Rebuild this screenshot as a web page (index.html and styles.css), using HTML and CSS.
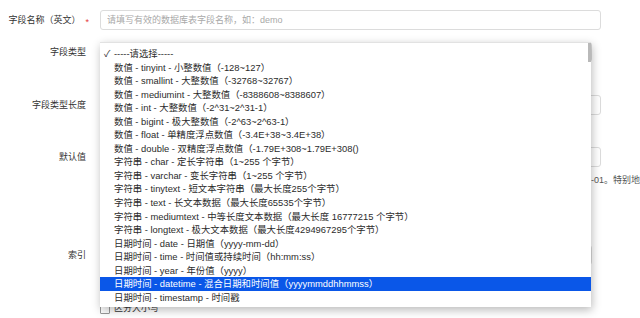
FILE: index.html
```
<!DOCTYPE html>
<html lang="zh-CN">

<head>
    <meta charset="UTF-8">
    <title>字段编辑</title>
    <link rel="stylesheet" href="styles.css">
</head>

<body>
    <form class="form">
        <div class="field">
            <label class="field-label field-label-req">字段名称（英文）<span class="req">*</span></label>
            <div class="field-body">
                <input class="control" type="text" placeholder="请填写有效的数据库表字段名称，如：demo">
            </div>
        </div>

        <div class="field field-type">
            <label class="field-label">字段类型</label>
            <div class="field-body">
                <div class="control select"></div>
                <p class="help">&nbsp;</p>
            </div>
        </div>

        <div class="field field-length">
            <label class="field-label">字段类型长度</label>
            <div class="field-body">
                <input class="control" type="text">
                <p class="help">&nbsp;</p>
            </div>
        </div>

        <div class="field field-default">
            <label class="field-label">默认值</label>
            <div class="field-body">
                <input class="control" type="text">
                <p class="help help-right">日期类型默认值格式如 2018-01-01。特别地</p>
            </div>
        </div>

        <div class="field field-index">
            <label class="field-label">索引</label>
            <div class="field-body">
                <div class="control select"></div>
                <label class="check"><span class="box"></span>区分大小写</label>
            </div>
        </div>
    </form>

    <!-- open native dropdown of 字段类型 -->
    <ul class="dropdown">
        <li class="opt checked">-----请选择-----</li>
        <li class="opt">数值 - tinyint - 小整数值（-128~127）</li>
        <li class="opt">数值 - smallint - 大整数值（-32768~32767）</li>
        <li class="opt">数值 - mediumint - 大整数值（-8388608~8388607）</li>
        <li class="opt">数值 - int - 大整数值（-2^31~2^31-1）</li>
        <li class="opt">数值 - bigint - 极大整数值（-2^63~2^63-1）</li>
        <li class="opt">数值 - float - 单精度浮点数值（-3.4E+38~3.4E+38）</li>
        <li class="opt">数值 - double - 双精度浮点数值（-1.79E+308~1.79E+308()</li>
        <li class="opt">字符串 - char - 定长字符串（1~255 个字节）</li>
        <li class="opt">字符串 - varchar - 变长字符串（1~255 个字节）</li>
        <li class="opt">字符串 - tinytext - 短文本字符串（最大长度255个字节）</li>
        <li class="opt">字符串 - text - 长文本数据（最大长度65535个字节）</li>
        <li class="opt">字符串 - mediumtext - 中等长度文本数据（最大长度 16777215 个字节）</li>
        <li class="opt">字符串 - longtext - 极大文本数据（最大长度4294967295个字节）</li>
        <li class="opt">日期时间 - date - 日期值（yyyy-mm-dd）</li>
        <li class="opt">日期时间 - time - 时间值或持续时间（hh:mm:ss）</li>
        <li class="opt">日期时间 - year - 年份值（yyyy）</li>
        <li class="opt active">日期时间 - datetime - 混合日期和时间值（yyyymmddhhmmss）</li>
        <li class="opt">日期时间 - timestamp - 时间戳</li>
        <li class="scroll-thumb"></li>
    </ul>
</body>

</html>
```

FILE: styles.css
```
body {
    margin: 0;
    background: #fff;
    font-family: 'Liberation Sans', 'Noto Sans CJK SC', sans-serif;
    font-size: 9px;
    color: #333;
    overflow: hidden;
    height: 318px;
}

.form {
    padding-top: 10px;
}

.field {
    display: flex;
    align-items: flex-start;
    margin-bottom: 12px;
}

.field-label {
    width: 100px;
    box-sizing: border-box;
    padding-right: 14px;
    text-align: right;
    line-height: 20px;
    flex-shrink: 0;
    white-space: nowrap;
}

.field-label-req {
    padding-right: 11px;
}

.req {
    color: #e4393c;
    margin-left: 5px;
    position: relative;
    top: 2px;
}

.field-body {
    flex: 1;
}

.control {
    display: block;
    box-sizing: border-box;
    width: 501px;
    height: 20px;
    margin: 0;
    padding: 0 6px;
    border: 1px solid #dcdcdc;
    border-radius: 3px;
    font: inherit;
    background: #fff;
}

.control::placeholder {
    color: #a9a9a9;
}

.select {
    width: 492px;
}

.help {
    margin: 7px 0 0;
    line-height: 13px;
    color: #555;
}

.field-type .help {
    margin-top: 8px;
}

.field-default {
    margin-bottom: 58px;
}

.help-right {
    width: 540px;
    text-align: right;
    white-space: nowrap;
}

.check {
    display: flex;
    align-items: center;
    margin-top: 38px;
    line-height: 11px;
}

.box {
    width: 8px;
    height: 8px;
    border: 1px solid #999;
    border-radius: 1px;
    margin-right: 4px;
}

.dropdown {
    position: absolute;
    left: 100px;
    top: 42px;
    width: 491px;
    margin: 0;
    padding: 4px 0 3px;
    list-style: none;
    background: #fff;
    border-top: 1px solid #e2e2e2;
    box-sizing: border-box;
    box-shadow: 1px 3px 9px rgba(0, 0, 0, 0.28);
    color: #2b2b2b;
    font-size: 9.4px;
}

.opt {
    height: 13.55px;
    line-height: 13.55px;
    padding-left: 14px;
    white-space: nowrap;
    overflow: hidden;
    position: relative;
}

.opt.checked::before {
    content: "✓";
    position: absolute;
    left: 4px;
    top: 0;
}

.opt.active {
    background: #0a57e8;
    color: #fff;
}

.scroll-thumb {
    position: absolute;
    right: 0;
    top: 0;
    width: 3px;
    height: 19px;
    background: #b9b9b9;
}
```
